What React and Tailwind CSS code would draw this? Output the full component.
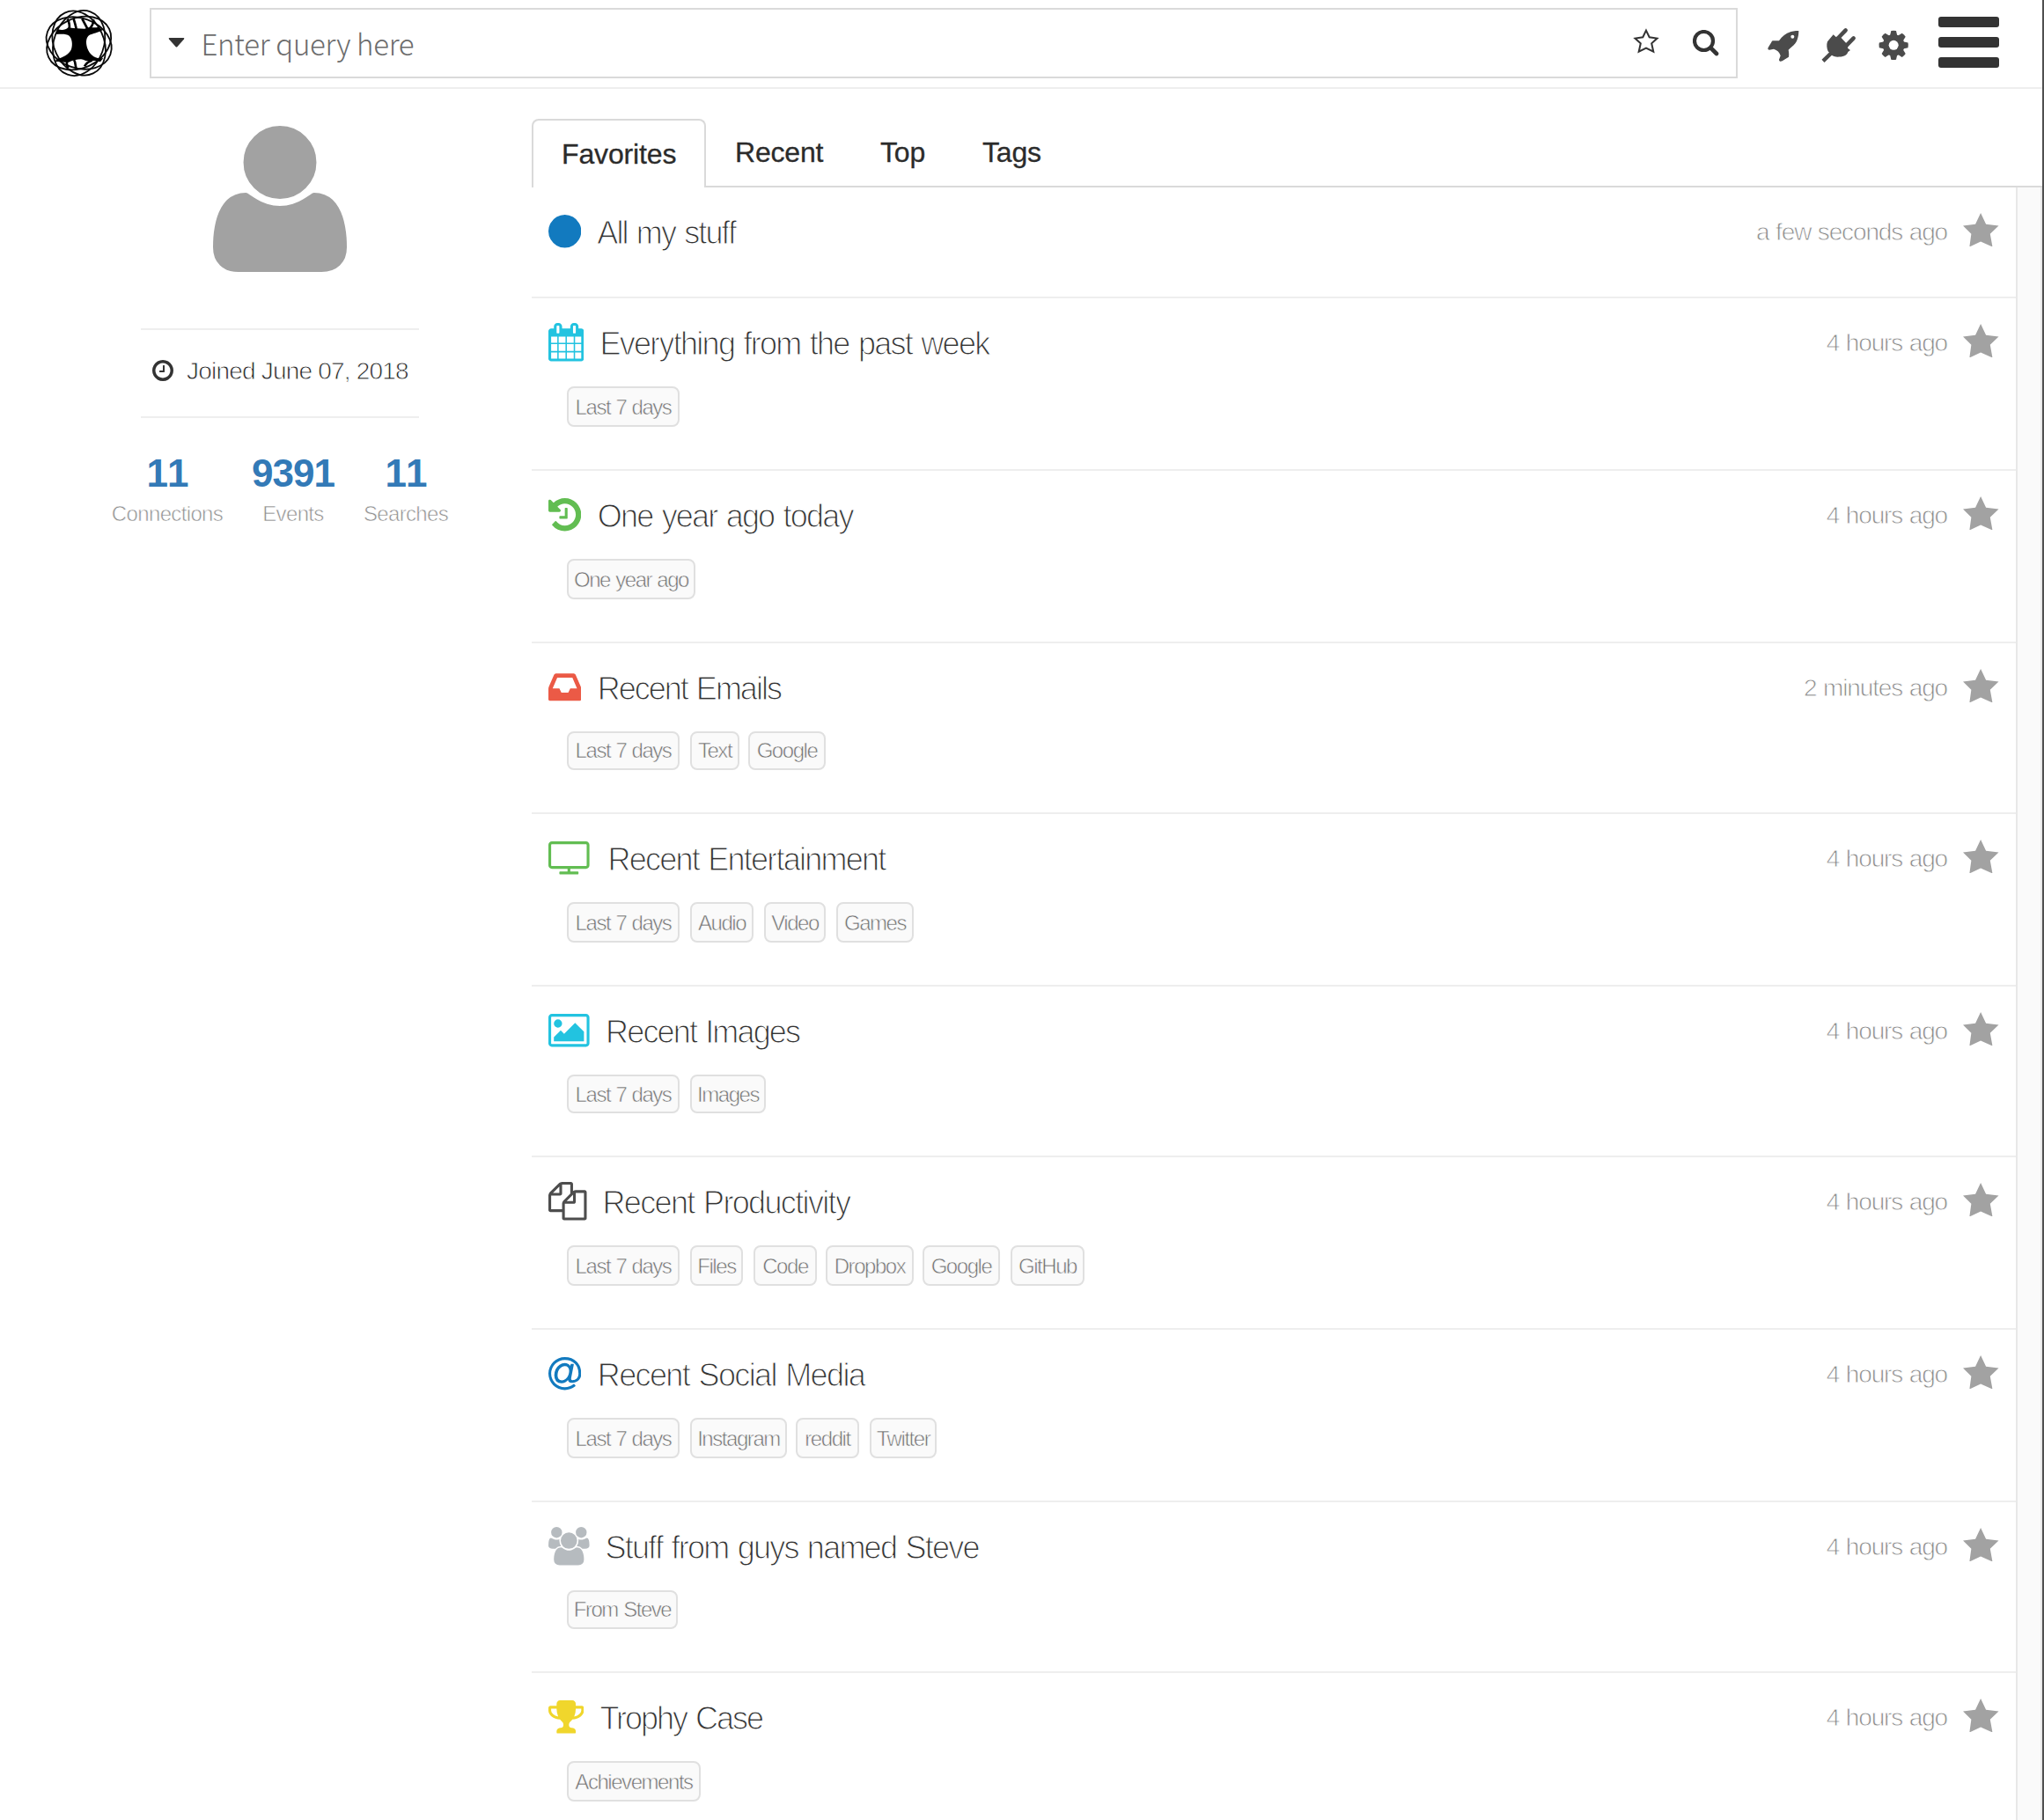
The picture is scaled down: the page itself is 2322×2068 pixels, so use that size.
const SANS = "font-['Liberation_Sans',Arial,sans-serif]";

/* ---------- glyph outlines on a 1792-unit grid ---------- */
const GLYPHS = {
  calendar: {
    box: "64 0 1664 1792",
    size: "w-[40.4px] h-[43.5px]",
    d: "M192 1664h288v-288h-288v288zm352 0h320v-288h-320v288zm-352-352h288v-320h-288v320zm352 0h320v-320h-320v320zm-352-384h288v-288h-288v288zm736 736h320v-288h-320v288zm-384-736h320v-288h-320v288zm768 736h288v-288h-288v288zm-384-352h320v-320h-320v320zm-352-864v-288q0-13-9.5-22.5t-22.5-9.5h-64q-13 0-22.5 9.5t-9.5 22.5v288q0 13 9.5 22.5t22.5 9.5h64q13 0 22.5-9.5t9.5-22.5zm736 864h288v-320h-288v320zm-384-384h320v-288h-320v288zm384 0h288v-288h-288v288zm32-480v-288q0-13-9.5-22.5t-22.5-9.5h-64q-13 0-22.5 9.5t-9.5 22.5v288q0 13 9.5 22.5t22.5 9.5h64q13 0 22.5-9.5t9.5-22.5zm384-64v1280q0 52-38 90t-90 38h-1408q-52 0-90-38t-38-90v-1280q0-52 38-90t90-38h128v-96q0-66 47-113t113-47h64q66 0 113 47t47 113v96h384v-96q0-66 47-113t113-47h64q66 0 113 47t47 113v96h128q52 0 90 38t38 90z",
  },
  circle: {
    box: "128 0 1536 1792",
    size: "w-[37.3px] h-[43.5px]",
    d: "M1664 896q0 209-103 385.5t-279.5 279.5-385.5 103-385.5-103-279.5-279.5-103-385.5 103-385.5 279.5-279.5 385.5-103 385.5 103 279.5 279.5 103 385.5z",
  },
  history: {
    box: "128 0 1536 1792",
    size: "w-[37.3px] h-[43.5px]",
    d: "M1664 896q0 156-61 298t-164 245-245 164-298 61q-172 0-327-72.5t-264-204.5q-7-10-6.5-22.5t8.5-20.5l137-138q10-9 25-9 16 2 23 12 73 95 179 147t225 52q104 0 198.5-40.5t163.5-109.5 109.5-163.5 40.5-198.5-40.5-198.5-109.5-163.5-163.5-109.5-198.5-40.5q-98 0-188 35.5t-160 101.5l137 138q31 30 14 69-17 40-59 40h-448q-26 0-45-19t-19-45v-448q0-42 40-59 39-17 69 14l130 129q107-101 244.5-156.5t284.5-55.5q156 0 298 61t245 164 164 245 61 298zm-640-288v448q0 14-9 23t-23 9h-320q-14 0-23-9t-9-23v-64q0-14 9-23t23-9h224v-352q0-14 9-23t23-9h64q14 0 23 9t9 23z",
  },
  inbox: {
    box: "128 0 1536 1792",
    size: "w-[37.3px] h-[43.5px]",
    d: "M1151 960h316q-1-3-2.5-8t-2.5-8l-212-496h-708l-212 496q-1 2-2.5 8t-2.5 8h316l95 192h320zm513 30v482q0 26-19 45t-45 19h-1408q-26 0-45-19t-19-45v-482q0-62 25-123l238-552q10-25 36.5-42t52.5-17h832q26 0 52.5 17t36.5 42l238 552q25 61 25 123z",
  },
  tv: {
    box: "0 0 1920 1792",
    size: "w-[46.6px] h-[43.5px]",
    d: "M1792 1248v-960q0-13-9.5-22.5t-22.5-9.5h-1600q-13 0-22.5 9.5t-9.5 22.5v960q0 13 9.5 22.5t22.5 9.5h1600q13 0 22.5-9.5t9.5-22.5zm128-960v960q0 66-47 113t-113 47h-736v128h352q14 0 23 9t9 23v64q0 14-9 23t-23 9h-832q-14 0-23-9t-9-23v-64q0-14 9-23t23-9h352v-128h-736q-66 0-113-47t-47-113v-960q0-66 47-113t113-47h1600q66 0 113 47t47 113z",
  },
  picture: {
    box: "0 0 1920 1792",
    size: "w-[46.6px] h-[43.5px]",
    d: "M640 576q0 80-56 136t-136 56-136-56-56-136 56-136 136-56 136 56 56 136zm1024 384v448h-1408v-192l320-320 160 160 512-512zm96-704h-1600q-13 0-22.5 9.5t-9.5 22.5v1216q0 13 9.5 22.5t22.5 9.5h1600q13 0 22.5-9.5t9.5-22.5v-1216q0-13-9.5-22.5t-22.5-9.5zm160 32v1216q0 66-47 113t-113 47h-1600q-66 0-113-47t-47-113v-1216q0-66 47-113t113-47h1600q66 0 113 47t47 113z",
  },
  files: {
    box: "0 0 1792 1792",
    size: "w-[43.5px] h-[43.5px]",
    d: "M1696 384q40 0 68 28t28 68v1216q0 40-28 68t-68 28h-960q-40 0-68-28t-28-68v-288h-544q-40 0-68-28t-28-68v-672q0-40 20-88t48-76l408-408q28-28 76-48t88-20h416q40 0 68 28t28 68v328q68-40 128-40h416zm-544 213l-299 299h299v-299zm-640-384l-299 299h299v-299zm196 647l316-316v-416h-384v416q0 40-28 68t-68 28h-416v640h512v-256q0-40 20-88t48-76zm956 804v-1152h-384v416q0 40-28 68t-68 28h-416v640h896z",
  },
  at: {
    box: "128 0 1536 1792",
    size: "w-[37.3px] h-[43.5px]",
    d: "M1100 775q0-108-53.5-169t-147.5-61q-63 0-124 30.5t-110 84.5-79.5 137-30.5 180q0 112 53.5 173t150.5 61q96 0 176-66.5t122.5-166 42.5-203.5zm564 121q0 111-37 197t-98.5 135-131.5 74.5-145 27.5q-6 .5-15.5.5h-16.5q-95 0-142-53-28-33-33-83-52 66-131.5 110t-173.5 44q-161 0-249.5-95.5t-88.5-269.5q0-157 66-290t179-210.5 246-77.5q87 0 155 35.5t106 99.5l2-19 11-56q1-6 5.5-12t9.5-6h118q5 0 13 11 5 5 3 16l-120 614q-5 24-5 48 0 39 12.5 52t44.5 13q28-1 57-5.5t73-24 77-50 57-89.5 24-137q0-292-174-466t-466-174q-130 0-248.5 51t-204 136.5-136.5 204-51 248.5 51 248.5 136.5 204 204 136.5 248.5 51q228 0 405-144 11-9 24-8t21 12l41 49q8 12 7 24-2 13-12 22-102 83-227.5 128t-258.5 45q-156 0-298-61t-245-164-164-245-61-298 61-298 164-245 245-164 298-61q344 0 556 212t212 556z",
  },
  users: {
    box: "0 0 1920 1792",
    size: "w-[46.6px] h-[43.5px]",
    d: "M593 896q-162 5-265 128h-134q-82 0-138-40.5t-56-118.5q0-353 124-353 6 0 43.5 21t97.5 42.5 119 21.5q67 0 133-23-5 37-5 66 0 139 81 256zm1071 637q0 120-73 189.5t-194 69.5h-874q-121 0-194-69.5t-73-189.5q0-53 3.5-103.5t14-109 26.5-108.5 43-97.5 62-81 85.5-53.5 111.5-20q10 0 43 21.5t73 48 107 48 135 21.5 135-21.5 107-48 73-48 43-21.5q61 0 111.5 20t85.5 53.5 62 81 43 97.5 26.5 108.5 14 109 3.5 103.5zm-1024-1277q0 106-75 181t-181 75-181-75-75-181 75-181 181-75 181 75 75 181zm704 384q0 159-112.5 271.5t-271.5 112.5-271.5-112.5-112.5-271.5 112.5-271.5 271.5-112.5 271.5 112.5 112.5 271.5zm576 225q0 78-56 118.5t-138 40.5h-134q-103-123-265-128 81-117 81-256 0-29-5-66 66 23 133 23 59 0 119-21.5t97.5-42.5 43.5-21q124 0 124 353zm-128-609q0 106-75 181t-181 75-181-75-75-181 75-181 181-75 181 75 75 181z",
  },
  user: {
    box: "256 256 1408 1536",
    size: "w-[152px] h-[166px]",
    d: "M1664 1533q0 120-73 189.5t-194 69.5h-874q-121 0-194-69.5t-73-189.5q0-53 3.5-103.5t14-109 26.5-108.5 43-97.5 62-81 85.5-53.5 111.5-20q10 0 43 21.5t73 48 107 48 135 21.5 135-21.5 107-48 73-48 43-21.5q61 0 111.5 20t85.5 53.5 62 81 43 97.5 26.5 108.5 14 109 3.5 103.5zm-320-893q0 159-112.5 271.5t-271.5 112.5-271.5-112.5-112.5-271.5 112.5-271.5 271.5-112.5 271.5 112.5 112.5 271.5z",
  },
  trophy: {
    box: "64 0 1664 1792",
    size: "w-[40.4px] h-[43.5px]",
    d: "M522 883q-74-162-74-371h-256v96q0 78 94.5 162t235.5 113zm1078-275v-96h-256q0 209-74 371 141-29 235.5-113t94.5-162zm128-128v128q0 71-41.5 143t-112 130-173 97.5-215.5 44.5q-42 54-95 95-38 34-52.5 72.5t-14.5 89.5q0 54 30.5 91t97.5 37q75 0 133.5 45.5t58.5 114.5v64q0 14-9 23t-23 9h-832q-14 0-23-9t-9-23v-64q0-69 58.5-114.5t133.5-45.5q67 0 97.5-37t30.5-91q0-51-14.5-89.5t-52.5-72.5q-53-41-95-95-113-5-215.5-44.5t-173-97.5-112-130-41.5-143v-128q0-40 28-68t68-28h288v-96q0-66 47-113t113-47h576q66 0 113 47t47 113v96h288q40 0 68 28t28 68z",
  },
  clock: {
    box: "128 128 1536 1536",
    size: "w-6 h-6",
    d: "M1024 544v448q0 14-9 23t-23 9h-320q-14 0-23-9t-9-23v-64q0-14 9-23t23-9h224v-352q0-14 9-23t23-9h64q14 0 23 9t9 23zm416 352q0-148-73-273t-198-198-273-73-273 73-198 198-73 273 73 273 198 198 273 73 273-73 198-198 73-273zm224 0q0 209-103 385.5t-279.5 279.5-385.5 103-385.5-103-279.5-279.5-103-385.5 103-385.5 279.5-279.5 385.5-103 385.5 103 279.5 279.5 103 385.5z",
  },
};

function Glyph({ name, className }) {
  const g = GLYPHS[name];
  return (
    <svg viewBox={g.box} className={`shrink-0 ${g.size} ${className}`} fill="currentColor" preserveAspectRatio="none">
      <path d={g.d} />
    </svg>
  );
}

function Logo() {
  return (
    <svg viewBox="0 0 270 258" className="h-[86px] w-[90px] shrink-0">
      <g fill="none" stroke="#0a0a0a" strokeWidth="5.5">
        {[20, 65, 110, 155].map((a) => (
          <ellipse key={a} cx="131" cy="129" rx="114" ry="85" transform={`rotate(${a} 131 129)`} />
        ))}
      </g>
      <path
        fill="#000"
        d="M60 82C74 86 86 84 94 76L112 78L150 80L168 74C178 76 188 76 198 74L212 84C196 94 178 96 166 102C156 110 155 122 157 136C160 154 170 170 188 178C196 182 206 182 214 180L204 193C192 190 182 188 172 190C162 194 150 186 138 184C124 184 108 188 96 194C82 196 66 190 50 193L54 184C78 178 98 166 105 150C110 134 108 114 98 104C88 96 70 98 52 99Z"
      />
      <g fill="none" stroke="#000" strokeWidth="8">
        <path d="M98 82C100 70 98 58 92 46" />
        <path d="M122 82C120 68 116 56 112 44" />
        <path d="M160 80L142 46" />
        <path d="M168 80C178 68 182 58 180 48" />
        <path d="M92 188C88 196 90 206 94 214" />
        <path d="M114 186C120 194 118 206 122 216" />
        <path d="M176 188C162 192 154 200 150 208" />
      </g>
    </svg>
  );
}

function Rocket() {
  return (
    <svg viewBox="20 0 114 168" className="h-14 w-[38px]">
      <path
        fill="#4b4b4b"
        d="M129 33C129 56 122 76 107 86L94 98C96 107 96 114 95 122L73 136C67 139 62 137 62 131L67 118C64 106 56 99 44 95L29 98C24 98 23 94 25 90L36 72C37 69 39 67 42 67L62 67C78 44 98 33 129 33Z"
      />
      <circle cx="108" cy="53" r="6" fill="#fff" />
    </svg>
  );
}

function Plug() {
  return (
    <svg viewBox="204 0 126 168" className="h-14 w-[42px]">
      <g stroke="#4b4b4b" strokeWidth="13.5" strokeLinecap="round">
        <path d="M262 60L290 31" />
        <path d="M290 86L317 58" />
      </g>
      <path d="M246 104L213 136" stroke="#4b4b4b" strokeWidth="13" />
      <path
        fill="#4b4b4b"
        d="M248 46L257 54L270 52L298 82L297 92L306 99L298 105C294 118 280 122 262 122C256 122 250 120 244 117L230 103C226 94 224 80 228 70Z"
      />
    </svg>
  );
}

function Gear() {
  return (
    <svg viewBox="400 0 108 168" className="h-14 w-9">
      <g fill="#4b4b4b">
        <circle cx="454.500" cy="82" r="37" />
        {[0, 45, 90, 135, 180, 225, 270, 315].map((a) => (
          <path key={a} d="M442 50L446 33Q454.500 31 463 33L467 50Z" transform={`rotate(${a} 454.500 82)`} />
        ))}
      </g>
      <circle cx="454.500" cy="82" r="16.500" fill="#fff" />
    </svg>
  );
}

const STAR = "1292,728 1310,766 1353,771 1324,799 1332,843 1292,825 1254,843 1260,799 1232,771 1274,766";

function Star() {
  return (
    <svg viewBox="1232 728 121 115" className="h-[38.500px] w-[40.500px] shrink-0">
      <polygon points={STAR} fill="#a2a2a2" />
    </svg>
  );
}

function Header() {
  return (
    <header className="flex h-[101px] border-b-2 border-[#eeeeee]">
      <div className="w-[170px] shrink-0 pt-[6px] pl-[46px]">
        <Logo />
      </div>
      <div className="mt-[9px] flex h-20 w-[1804px] shrink-0 items-center border-2 border-[#dadada] pr-[19px] pl-[19px]">
        <svg viewBox="0 0 19 11" className="-mt-[2px] h-[11px] w-[19px]" fill="#333">
          <path d="M1.500 0H17.500Q19 0 18 1.500L10.500 10Q9.500 11 8.500 10L1 1.500Q0 0 1.500 0Z" />
        </svg>
        <span className="ml-[18.500px] flex-1 text-[33px] leading-10 font-light tracking-[-0.300px] text-[#6c6c6c] font-['Noto_Sans_CJK_SC','Noto_Sans',sans-serif]">
          Enter query here
        </span>
        <svg viewBox="0 0 30 29" className="-mt-[5px] h-[29px] w-[30px]" fill="none" stroke="#333" strokeWidth="2">
          <path d="M15 2.600L18.700 10.300L27.500 11.600L21.200 17.300L23.300 26.700L15 22.600L6.700 26.700L8.800 17.300L2.500 11.600L11.300 10.300Z" />
        </svg>
        <svg viewBox="0 0 30 30" className="ml-[38px] h-[30px] w-[30px]" fill="none" stroke="#333">
          <circle cx="12.500" cy="12.500" r="10.500" strokeWidth="4.200" />
          <path d="M20.500 20.500L27 27" strokeWidth="4.600" strokeLinecap="round" />
        </svg>
      </div>
      <div className="ml-[32.500px] flex pt-6">
        <Rocket />
        <div className="ml-[23px]">
          <Plug />
        </div>
        <div className="ml-[23px]">
          <Gear />
        </div>
      </div>
      <div className="mt-[19px] ml-[33px] flex w-[69px] flex-col gap-[11px]">
        <div className="h-3 rounded-[3px] bg-[#333]" />
        <div className="h-3 rounded-[3px] bg-[#333]" />
        <div className="h-3 rounded-[3px] bg-[#333]" />
      </div>
    </header>
  );
}

const STATS = [
  { value: "11", label: "Connections", box: "w-[126px]" },
  { value: "9391", label: "Events", box: "w-[90px] ml-[35px]" },
  { value: "11", label: "Searches", box: "w-[94px] ml-[36px]" },
];

function Profile() {
  return (
    <aside className="flex w-[604px] shrink-0 flex-col">
      <div className="flex w-[636px] flex-col items-center pt-[42px]">
        <Glyph name="user" className="text-[#a2a2a2]" />
        <div className="mt-16 flex h-[102px] w-[316px] items-center border-y-2 border-[#eeeeee] pl-[13px]">
          <Glyph name="clock" className="-mt-[6px] text-[#333]" />
          <span className="-mt-[5px] ml-[15px] text-[28px] leading-8 tracking-[-0.800px] whitespace-nowrap text-[#222] [-webkit-text-stroke:0.8px_#fff]">
            Joined June 07, 2018
          </span>
        </div>
      </div>
      <div className="flex pt-[40px] pl-[127px]">
        {STATS.map((s) => (
          <div key={s.label} className={`flex flex-col items-center whitespace-nowrap ${s.box}`}>
            <span className="text-[44px] leading-[46px] font-bold tracking-[-1px] text-[#337ab7] [font-kerning:none]">
              {s.value}
            </span>
            <span className="mt-[7px] text-2xl leading-8 tracking-[-0.650px] text-[#8f8f8f] [-webkit-text-stroke:0.6px_#fff]">
              {s.label}
            </span>
          </div>
        ))}
      </div>
    </aside>
  );
}

function Tabs() {
  return (
    <div className="flex h-[78px] text-[32px] leading-9 text-[#2b2b2b] [-webkit-text-stroke:0.3px_#2b2b2b]">
      <div className="w-[198px] shrink-0 rounded-t-lg border-2 border-b-0 border-[#dadada] pt-[20px] pl-[32px] tracking-[-0.150px]">
        Favorites
      </div>
      <div className="flex flex-1 border-b-2 border-[#dadada] pt-[20px] tracking-[-0.200px]">
        <span className="ml-[33px] w-[165px]">Recent</span>
        <span className="w-[116px]">Top</span>
        <span>Tags</span>
      </div>
    </div>
  );
}

const WEEK = ["Last 7 days", "w-32"];

const ROWS = [
  {
    icon: "circle",
    tint: "text-[#127abf]",
    title: "All my stuff",
    fit: "tracking-[-1.880px] ml-[18px]",
    ago: "a few seconds ago",
    height: "h-[126px]",
  },
  {
    icon: "calendar",
    tint: "text-[#22c3e0]",
    title: "Everything from the past week",
    fit: "tracking-[-1.730px] ml-[18px]",
    height: "h-[196px]",
    tags: [WEEK],
  },
  {
    icon: "history",
    tint: "text-[#62bd52]",
    title: "One year ago today",
    fit: "tracking-[-1.800px] ml-[18.500px]",
    height: "h-[196px]",
    tags: [["One year ago", "w-[146px]"]],
  },
  {
    icon: "inbox",
    tint: "text-[#eb5a46]",
    title: "Recent Emails",
    fit: "tracking-[-2px] ml-[18.500px]",
    ago: "2 minutes ago",
    height: "h-[194px]",
    lift: "pt-0 pb-px",
    tags: [WEEK, ["Text", "w-14 ml-3"], ["Google", "w-[88px] ml-[10px]"]],
  },
  {
    icon: "tv",
    tint: "text-[#62bd52]",
    title: "Recent Entertainment",
    fit: "tracking-[-1.760px] ml-[21px]",
    height: "h-[196px]",
    tags: [WEEK, ["Audio", "w-[72px] ml-3"], ["Video", "w-[70px] ml-3"], ["Games", "w-[88px] ml-3"]],
  },
  {
    icon: "picture",
    tint: "text-[#22c3e0]",
    title: "Recent Images",
    fit: "tracking-[-1.850px] ml-[18.500px]",
    height: "h-[194px]",
    tags: [WEEK, ["Images", "w-[86px] ml-3"]],
  },
  {
    icon: "files",
    tint: "text-[#4d4d4d]",
    title: "Recent Productivity",
    fit: "tracking-[-1.650px] ml-[18px]",
    height: "h-[196px]",
    tags: [
      WEEK,
      ["Files", "w-[60px] ml-3"],
      ["Code", "w-[72px] ml-3"],
      ["Dropbox", "w-[100px] ml-[10px]"],
      ["Google", "w-[88px] ml-[10px]"],
      ["GitHub", "w-[84px] ml-3"],
    ],
  },
  {
    icon: "at",
    tint: "text-[#127abf]",
    title: "Recent Social Media",
    fit: "tracking-[-1.620px] ml-[18.500px]",
    height: "h-[196px]",
    tags: [
      WEEK,
      ["Instagram", "w-[110px] ml-3"],
      ["reddit", "w-[72px] ml-[10px]"],
      ["Twitter", "w-[76px] ml-3"],
    ],
  },
  {
    icon: "users",
    tint: "text-[#b6bbbf]",
    title: "Stuff from guys named Steve",
    fit: "tracking-[-1.760px] ml-[18px]",
    height: "h-[194px]",
    lift: "pt-0 pb-px",
    tags: [["From Steve", "w-[126px]"]],
  },
  {
    icon: "trophy",
    tint: "text-[#f0d62c]",
    title: "Trophy Case",
    fit: "tracking-[-2px] ml-[18px]",
    height: "h-[196px]",
    tags: [["Achievements", "w-[152px]"]],
  },
];

function Row({ row }) {
  return (
    <li className={`flex shrink-0 flex-col border-b-2 border-[#eeeeee] ${row.height}`}>
      <div className="flex h-[100px] shrink-0 items-center pr-[19.500px] pl-[19px]">
        <Glyph name={row.icon} className={row.tint} />
        <span
          className={`flex-1 pt-[3px] text-[36px] leading-10 [word-spacing:2px] whitespace-nowrap text-[#333] [-webkit-text-stroke:1.100px_#fff] ${row.fit}`}
        >
          {row.title}
        </span>
        <span className="pt-px text-[28px] leading-8 tracking-[-1.150px] [word-spacing:1px] whitespace-nowrap text-[#8a8a8a] [-webkit-text-stroke:0.8px_#fff]">
          {row.ago ?? "4 hours ago"}
        </span>
        <div className="-mt-1 ml-[18px]">
          <Star />
        </div>
      </div>
      {row.tags && (
        <div className="mb-12 flex flex-1 pl-10">
          {row.tags.map(([label, box]) => (
            <span
              key={label}
              className={`flex items-center justify-center rounded-lg border-2 border-[#e0e0e0] bg-[#fafafa] text-2xl tracking-[-1.450px] [word-spacing:1px] whitespace-nowrap text-[#707070] [-webkit-text-stroke:0.6px_#fafafa] ${row.lift ?? "pt-px"} ${box}`}
            >
              {label}
            </span>
          ))}
        </div>
      )}
    </li>
  );
}

export default function App() {
  return (
    <div className={`flex h-[2068px] w-[2322px] overflow-hidden border-r-2 border-[#505050] bg-white ${SANS}`}>
      <div className="flex w-[2320px] shrink-0 flex-col">
        <Header />
        <div className="flex min-h-0 flex-1">
          <Profile />
          <main className="flex min-w-0 flex-1 flex-col pt-[34px]">
            <Tabs />
            <div className="flex min-h-0 flex-1">
              <ul className="flex min-w-0 flex-1 flex-col overflow-hidden">
                {ROWS.map((row) => (
                  <Row key={row.title} row={row} />
                ))}
              </ul>
              <div className="w-[30px] shrink-0 border-x-2 border-[#e8e8e8] bg-[#fafafa]" />
            </div>
          </main>
        </div>
      </div>
    </div>
  );
}
